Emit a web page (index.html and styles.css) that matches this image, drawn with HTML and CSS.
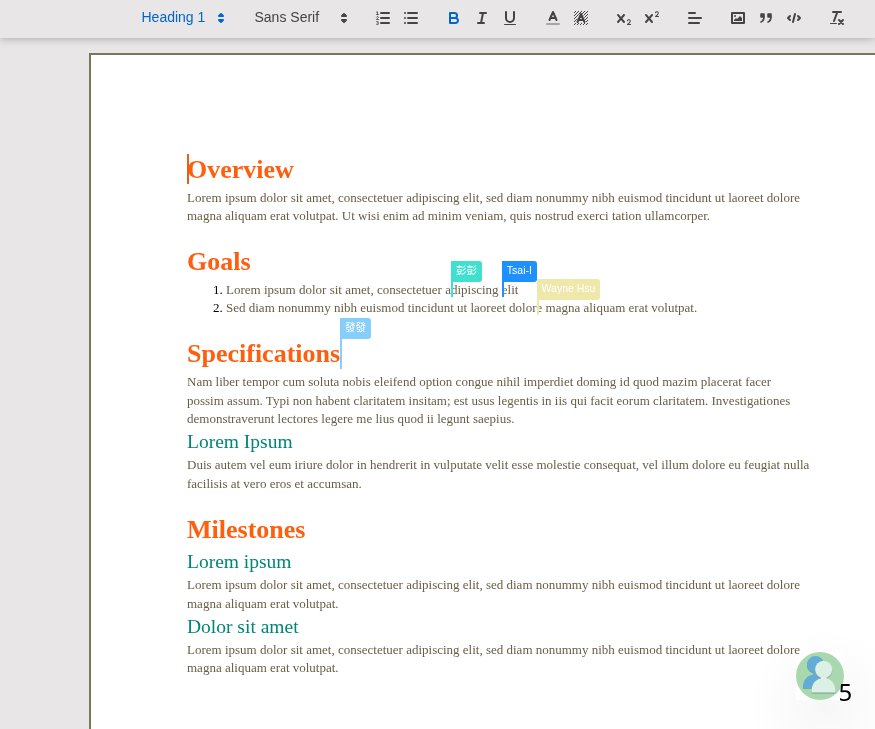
FILE: index.html
```html
<!DOCTYPE html>
<html lang="en">
<head>
<meta charset="utf-8">
<title>Document editor</title>
<link rel="stylesheet" href="styles.css">
</head>
<body>
<div class="toolbar">
  <div class="picker header active"><span>Heading 1</span><svg viewBox="0 0 18 18"><polygon class="b" points="7 11 9 13 11 11 7 11"/><polygon class="b" points="7 7 9 5 11 7 7 7"/></svg></div>
  <div class="picker font"><span>Sans Serif</span><svg viewBox="0 0 18 18"><polygon class="b" points="7 11 9 13 11 11 7 11"/><polygon class="b" points="7 7 9 5 11 7 7 7"/></svg></div>
  <div class="group">
    <button><svg viewBox="0 0 18 18"><path class="s" d="M7 4H15M7 9H15M7 14H15"/><path class="s thin" d="M2.5 5.5H4.5M3.5 5.5V2.8L2.5 3.2M4.5 10.5H2.5C2.5 9.6 4.4 9.3 4.4 8.3C4.4 7.4 2.9 7.3 2.5 8.1M2.5 12.6C3.3 12.2 4.4 12.4 4.4 13.2C4.4 14 3.3 14 3.3 14C3.3 14 4.5 14 4.5 14.9C4.5 15.8 3 15.8 2.4 15.3"/></svg></button>
    <button><svg viewBox="0 0 18 18"><path class="s" d="M6 4H15M6 9H15M6 14H15M3 4H3M3 9H3M3 14H3"/></svg></button>
  </div>
  <div class="group">
    <button class="active"><svg viewBox="0 0 18 18"><path class="s" d="M5,4H9.5A2.5,2.5,0,0,1,12,6.5v0A2.5,2.5,0,0,1,9.5,9H5A0,0,0,0,1,5,9V4A0,0,0,0,1,5,4Z"/><path class="s" d="M5,9h5.5A2.5,2.5,0,0,1,13,11.5v0A2.5,2.5,0,0,1,10.5,14H5a0,0,0,0,1,0,0V9A0,0,0,0,1,5,9Z"/></svg></button>
    <button><svg viewBox="0 0 18 18"><path class="s" d="M7 4H13M5 14H11M8 14L10 4"/></svg></button>
    <button><svg viewBox="0 0 18 18"><path class="s" d="M5,3V9a4.012,4.012,0,0,0,4,4H9a4.012,4.012,0,0,0,4-4V3"/><rect class="f" x="3" y="15" width="12" height="1" rx=".5"/></svg></button>
  </div>
  <div class="group">
    <button><svg viewBox="0 0 18 18"><path class="s faded" d="M3 15H15"/><path class="s" d="M5.5 11L9 3L12.5 11M11.63 9H6.38"/></svg></button>
    <button><svg viewBox="0 0 18 18"><defs><pattern id="hatch" width="3" height="3" patternUnits="userSpaceOnUse"><path class="f" d="M2 0h1v1h-1zM1 1h1v1h-1zM0 2h1v1h-1z"/></pattern></defs><path fill="url(#hatch)" d="M2 2H16V16H14V13L11 5H7L4 13V16H2Z"/><path fill="url(#hatch)" d="M5 14H13V16H5Z"/><path class="s" d="M5.5 13L9 5L12.5 13M11.63 11H6.38M9 6V8"/></svg></button>
  </div>
  <div class="group">
    <button><svg viewBox="0 0 18 18"><path class="f" d="M15.5,15H13.861a3.858,3.858,0,0,0,1.914-2.975,1.8,1.8,0,0,0-1.6-1.751A1.921,1.921,0,0,0,12.021,11.7a.5.5,0,1,0,.957.291h0a.914.914,0,0,1,1.053-.725.81.81,0,0,1,.744.762c0,1.076-1.169,1.87-1.936,2.391A1.456,1.456,0,0,0,12,15.5a.5.5,0,0,0,.5.5h3A.5.5,0,0,0,15.5,15Z"/><path class="f" d="M9.65,5.241a1,1,0,0,0-1.409.108L6,7.964,3.759,5.349A1,1,0,0,0,2.192,6.59L4.684,9.5,2.241,12.349A1,1,0,0,0,3.759,13.651L6,11.036,8.241,13.651A1,1,0,0,0,9.759,12.349L7.316,9.5,9.759,6.651A1,1,0,0,0,9.65,5.241Z"/></svg></button>
    <button><svg viewBox="0 0 18 18"><path class="f" d="M15.5,7H13.861a4.015,4.015,0,0,0,1.914-2.975,1.8,1.8,0,0,0-1.6-1.751A1.922,1.922,0,0,0,12.021,3.7a.5.5,0,1,0,.957.291.917.917,0,0,1,1.053-.725.81.81,0,0,1,.744.762c0,1.077-1.164,1.925-1.934,2.486A1.423,1.423,0,0,0,12,7.5a.5.5,0,0,0,.5.5h3A.5.5,0,0,0,15.5,7Z"/><path class="f" d="M9.65,5.241a1,1,0,0,0-1.409.108L6,7.964,3.759,5.349A1,1,0,0,0,2.192,6.59L4.684,9.5,2.241,12.349A1,1,0,0,0,3.759,13.651L6,11.036,8.241,13.651A1,1,0,0,0,9.759,12.349L7.316,9.5,9.759,6.651A1,1,0,0,0,9.65,5.241Z"/></svg></button>
  </div>
  <div class="group">
    <button><svg viewBox="0 0 18 18"><path class="s" d="M3 9H15M3 14H13M3 4H9"/></svg></button>
  </div>
  <div class="group">
    <button><svg viewBox="0 0 18 18"><rect class="s" x="3" y="4" width="12" height="10"/><circle class="f" cx="6" cy="7" r="1"/><polyline class="f" points="5 12 5 11 7 9 8 10 11 7 13 9 13 12 5 12"/></svg></button>
    <button><svg viewBox="0 0 18 18"><rect class="b" x="4" y="5" width="3" height="3"/><rect class="b" x="11" y="5" width="3" height="3"/><path class="b" d="M7,8c0,4.031-3,5-3,5"/><path class="b" d="M14,8c0,4.031-3,5-3,5"/></svg></button>
    <button><svg viewBox="0 0 18 18"><path class="s" d="M5 7L3 9L5 11M13 7L15 9L13 11M10 5L8 13"/></svg></button>
  </div>
  <div class="group">
    <button><svg viewBox="0 0 18 18"><path class="s" d="M5 3H13M6 12L9.35 3M11 11L15 15M15 11L11 15"/><rect class="f" x="2" y="14" width="7" height="1" rx=".5"/></svg></button>
  </div>
</div>
<main class="page">
  <h1 class="caret">Overview</h1>
  <p>Lorem ipsum dolor sit amet, consectetuer adipiscing elit, sed diam nonummy nibh euismod tincidunt ut laoreet dolore magna aliquam erat volutpat. Ut wisi enim ad minim veniam, quis nostrud exerci tation ullamcorper.</p>
  <p><br></p>
  <h1>Goals</h1>
  <ol>
    <li>Lorem ipsum dolor sit amet, consectetuer a<span class="cursor teal"><b>彭彭</b></span>dipiscing <span class="cursor blue"><b>Tsai-I</b></span>elit</li>
    <li>Sed diam nonummy nibh euismod tincidunt ut laoreet dolor<span class="cursor khaki"><b>Wayne Hsu</b></span>e magna aliquam erat volutpat.</li>
  </ol>
  <p><br></p>
  <h1>Specifications<span class="cursor sky"><b>發發</b></span></h1>
  <p>Nam liber tempor cum soluta nobis eleifend option congue nihil imperdiet doming id quod mazim placerat facer possim assum. Typi non habent claritatem insitam; est usus legentis in iis qui facit eorum claritatem. Investigationes demonstraverunt lectores legere me lius quod ii legunt saepius.</p>
  <h2>Lorem Ipsum</h2>
  <p>Duis autem vel eum iriure dolor in hendrerit in vulputate velit esse molestie consequat, vel illum dolore eu feugiat nulla facilisis at vero eros et accumsan.</p>
  <p><br></p>
  <h1>Milestones</h1>
  <h2>Lorem ipsum</h2>
  <p>Lorem ipsum dolor sit amet, consectetuer adipiscing elit, sed diam nonummy nibh euismod tincidunt ut laoreet dolore magna aliquam erat volutpat.</p>
  <h2>Dolor sit amet</h2>
  <p>Lorem ipsum dolor sit amet, consectetuer adipiscing elit, sed diam nonummy nibh euismod tincidunt ut laoreet dolore magna aliquam erat volutpat.</p>
</main>
<div class="people">
  <svg viewBox="0 0 48 48"><circle cx="24" cy="24" r="24" fill="#a9d8af"/><g fill="#5c9d97" transform="translate(0 .8)"><circle cx="19.500" cy="12.500" r="8.500"/><path d="M7 36C7 28 11 24 17 22.500V20H22V23L28 27V36Z"/></g><g fill="#64acd8"><circle cx="19.500" cy="12.500" r="8.500"/><path d="M7 36C7 28 11 24 17 22.500V20H22V23L28 27V36Z"/></g><g fill="#7d9f90" transform="translate(0 .9)"><circle cx="27.700" cy="17.300" r="8.600"/><path d="M15.500 40.500C15.500 32 19 27.500 25 26.500V24H30.500V26.500C36 27.500 39.500 32 39.500 40.500Z"/></g><g fill="#dcf0e5"><circle cx="27.700" cy="17.300" r="8.600"/><path d="M15.500 40.500C15.500 32 19 27.500 25 26.500V24H30.500V26.500C36 27.500 39.500 32 39.500 40.500Z"/></g></svg>
  <span>5</span>
</div>
</body>
</html>
```
FILE: styles.css
```css
* { box-sizing: border-box; }
body {
  margin: 0;
  height: 729px;
  overflow: hidden;
  background: #e8e6e7;
  font-family: "Liberation Serif", serif;
}
.toolbar {
  position: relative;
  display: flex;
  gap: 15px;
  height: 38px;
  padding: 6px 0 0 133px;
  background: #e8e6e7;
  box-shadow: 0 1px 8px rgba(0, 0, 0, .25);
  color: #444;
  font: 500 14px/24px "Liberation Sans", sans-serif;
}
.picker {
  display: flex;
  justify-content: space-between;
  align-items: center;
  height: 24px;
  padding: 0 1px 0 8.500px;
}
.picker span { position: relative; top: -1px; }
.header { width: 98px; }
.font { width: 108px; }
.group { display: flex; flex: none; }
.toolbar svg { display: block; width: 18px; height: 18px; }
button {
  width: 28px;
  height: 24px;
  padding: 3px 5px;
  border: 0;
  background: none;
  color: inherit;
}
.active, button.active { color: #06c; }
.s, .b {
  fill: none;
  stroke: currentColor;
  stroke-width: 2;
  stroke-linecap: round;
  stroke-linejoin: round;
}
.b, .f { fill: currentColor; }
.b { stroke-width: 1.5; }
.picker .b { stroke-width: 2; }
.thin { stroke-width: 1; opacity: .8; }
.faded { opacity: .4; }
.page {
  width: 820px;
  height: 676px;
  margin: 15px 0 0 89px;
  padding: 96.700px 96px 0;
  border: 2px solid #77775a;
  border-bottom: 0;
  background: #fff;
}
h1, h2, p, ol { margin: 0; line-height: 1.42; }
h1 {
  position: relative;
  color: #ff5e0e;
  font-size: 26px;
}
h2 {
  color: #008575;
  font-size: 19.5px;
  font-weight: 400;
}
p, ol {
  width: 623.5px;
  color: #695d46;
  font-size: 13px;
}
ol { padding-left: 39px; }
li::marker { color: #000; }
.caret::before {
  content: "";
  position: absolute;
  left: 0;
  top: 2.5px;
  width: 2px;
  height: 30px;
  background: #e06020;
}
.cursor { position: relative; }
.cursor::before {
  content: "";
  position: absolute;
  left: 0;
  top: -21px;
  width: 2px;
  height: 36px;
  background: var(--c);
}
.cursor b {
  position: absolute;
  left: 0;
  top: -21px;
  height: 21px;
  padding: 0 5px;
  border-radius: 0 3px 3px 0;
  background: var(--c);
  color: #fff;
  font: 400 10.500px/19px "Liberation Sans", "Noto Sans CJK TC", sans-serif;
  white-space: nowrap;
}
.teal { --c: #40e0d0; }
.blue { --c: #1e90ff; }
.khaki { --c: #eee8aa; }
.sky { --c: #87cefa; }
.sky::before { height: 51px; }
.people {
  position: absolute;
  left: 750px;
  top: 630px;
  width: 125px;
  height: 99px;
  background: radial-gradient(circle at 75px 75px, #f7f7f7, #fff 75px);
  mix-blend-mode: multiply;
}
.people svg {
  position: absolute;
  left: 46px;
  top: 22px;
  width: 48px;
  height: 48px;
  background: #fff;
}
.people span {
  position: absolute;
  left: 88.5px;
  top: 47px;
  color: #000;
  font: 24px/30px "Noto Sans", sans-serif;
}
```
